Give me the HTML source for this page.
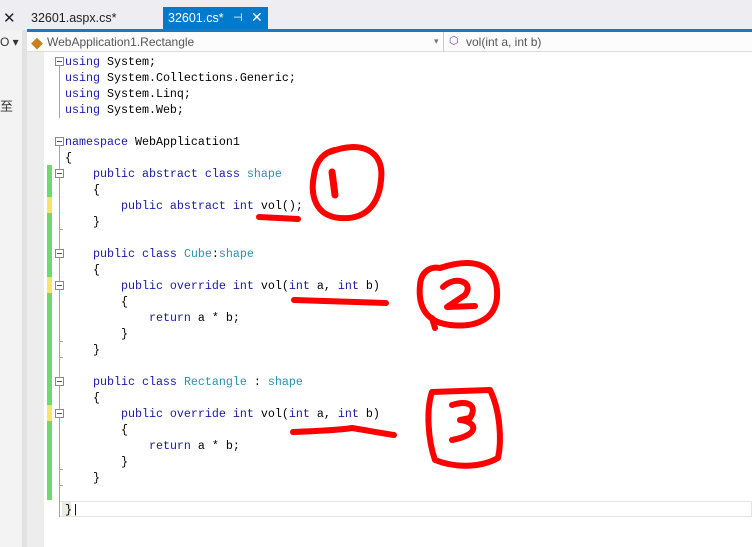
<!DOCTYPE html>
<html><head><meta charset="utf-8"><style>
*{margin:0;padding:0;box-sizing:border-box}
body{width:752px;height:547px;overflow:hidden;background:#fff;position:relative;font-family:"Liberation Sans","Noto Sans CJK SC",sans-serif}
.abs{position:absolute}
pre{position:absolute;left:65px;top:54px;font-family:"Liberation Mono",monospace;font-size:11.67px;line-height:16px;color:#000}
.k{color:#1a1aa6}.t{color:#2b91af}
</style></head><body>
<div class="abs" style="left:0;top:0;width:752px;height:30px;background:#eeeef2"></div>
<div class="abs" style="left:3px;top:9px;font-size:15px;color:#222">✕</div>
<div class="abs" style="left:31px;top:11px;font-size:12.5px;color:#1e1e1e">32601.aspx.cs*</div>
<div class="abs" style="left:163px;top:7px;width:105px;height:24px;background:#007acc"></div>
<div class="abs" style="left:168px;top:11px;font-size:12.5px;color:#fff">32601.cs*</div>
<div class="abs" style="left:233px;top:11px;font-size:11px;color:#fff">⊣</div>
<div class="abs" style="left:251px;top:9px;font-size:14px;color:#fff">✕</div>
<div class="abs" style="left:27px;top:29px;width:725px;height:3px;background:#1a7abf"></div>
<div class="abs" style="left:0;top:30px;width:22px;height:517px;background:#f3f3f3"></div>
<div class="abs" style="left:22px;top:30px;width:5px;height:517px;background:#e2e2e2"></div>
<div class="abs" style="left:27px;top:52px;width:17px;height:495px;background:#ededed"></div>
<div class="abs" style="left:0;top:35px;font-size:12px;color:#333">O ▾</div>
<div class="abs" style="left:0;top:96px;font-size:13px;color:#333">至</div>
<div class="abs" style="left:27px;top:32px;width:725px;height:20px;background:#fcfcfd;border-bottom:1px solid #ddd"></div>
<div class="abs" style="left:31px;top:35px;font-size:12px;color:#c87e1a">◆</div>
<div class="abs" style="left:47px;top:35px;font-size:12px;color:#555">WebApplication1.Rectangle</div>
<div class="abs" style="left:434px;top:36px;font-size:9px;color:#777">▾</div>
<div class="abs" style="left:443px;top:32px;width:1px;height:20px;background:#ccc"></div>
<div class="abs" style="left:449px;top:34px;font-size:11px;color:#7a3c9e">⬡</div>
<div class="abs" style="left:466px;top:35px;font-size:12px;color:#555">vol(int a, int b)</div>
<div class="abs" style="left:47px;top:165px;width:5px;height:335px;background:#6fd86f"></div>
<div class="abs" style="left:47px;top:197px;width:5px;height:16px;background:#f5e36a"></div>
<div class="abs" style="left:47px;top:277px;width:5px;height:16px;background:#f5e36a"></div>
<div class="abs" style="left:47px;top:405px;width:5px;height:16px;background:#f5e36a"></div>
<div class="abs" style="left:59px;top:62px;width:1px;height:56px;background:#a5a5a5"></div>
<div class="abs" style="left:59px;top:142px;width:1px;height:375px;background:#a5a5a5"></div>
<div class="abs" style="left:60px;top:501px;width:692px;height:16px;border:1px solid #e4e4e4;border-left:none"></div>
<div class="abs" style="left:62px;top:502px;width:9px;height:14px;background:#ecece4"></div>
<svg class="abs" style="left:0;top:0" width="752" height="547">
<g fill="#fff" stroke="#888" stroke-width="1">
<rect x="55.5" y="57.5" width="8" height="8"/><rect x="55.5" y="137.5" width="8" height="8"/>
<rect x="55.5" y="169.5" width="8" height="8"/><rect x="55.5" y="249.5" width="8" height="8"/>
<rect x="55.5" y="281.5" width="8" height="8"/><rect x="55.5" y="377.5" width="8" height="8"/>
<rect x="55.5" y="409.5" width="8" height="8"/></g>
<g stroke="#555"><path d="M57 61.5h5M57 141.5h5M57 173.5h5M57 253.5h5M57 285.5h5M57 381.5h5M57 413.5h5"/>
<path stroke="#aaa" d="M59 229.5h4M59 357.5h4M59 469.5h4M59 485.5h4M59 341.5h4"/></g>
<g fill="none" stroke="#f00" stroke-width="6" stroke-linecap="round" stroke-linejoin="round">
<path d="M259 217 L298 219"/>
<path d="M330 152 C360 140 385 150 381 180 C379 205 365 220 340 218 C315 216 310 195 314 175 C316 160 325 152 335 150"/>
<path d="M332 172 L335 195" stroke-width="7"/>
<path d="M294 300 L386 303"/>
<path d="M440 268 C470 258 495 262 497 290 C499 318 478 328 450 325 C425 322 418 305 420 285 C421 272 430 266 440 268 M432 318 L435 328"/>
<path d="M443 287 C455 275 475 282 465 295 L447 307 L475 306"/>
<path d="M293 432 C320 431 340 430 352 428 C365 430 380 433 394 435"/>
<path d="M432 392 L490 390 C500 410 502 440 498 458 C480 468 455 468 435 460 C428 440 426 410 432 392"/>
<path d="M452 405 C468 400 478 405 470 418 L460 420 C478 422 480 435 452 440"/>
</g></svg>
<pre><span class="k">using</span> System;
<span class="k">using</span> System.Collections.Generic;
<span class="k">using</span> System.Linq;
<span class="k">using</span> System.Web;

<span class="k">namespace</span> WebApplication1
{
    <span class="k">public abstract class</span> <span class="t">shape</span>
    {
        <span class="k">public abstract int</span> vol();
    }

    <span class="k">public class</span> <span class="t">Cube</span>:<span class="t">shape</span>
    {
        <span class="k">public override int</span> vol(<span class="k">int</span> a, <span class="k">int</span> b)
        {
            <span class="k">return</span> a * b;
        }
    }

    <span class="k">public class</span> <span class="t">Rectangle</span> : <span class="t">shape</span>
    {
        <span class="k">public override int</span> vol(<span class="k">int</span> a, <span class="k">int</span> b)
        {
            <span class="k">return</span> a * b;
        }
    }

}|</pre>
</body></html>
